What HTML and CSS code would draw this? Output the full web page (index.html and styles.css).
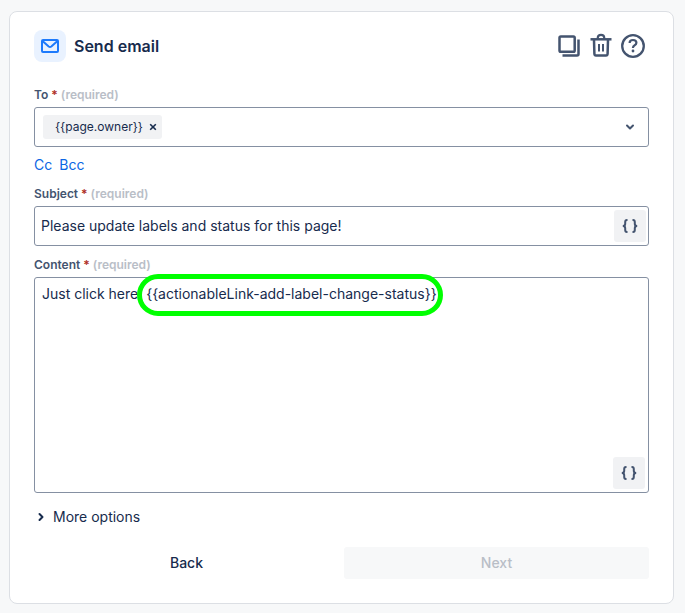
FILE: index.html
```html
<!DOCTYPE html>
<html lang="en">
<head>
    <meta charset="UTF-8">
    <meta name="viewport" content="width=device-width, initial-scale=1.0">
    <title>Send email</title>
    <link rel="stylesheet" href="styles.css">
</head>
<body>
    <form class="card">
        <header class="card-header">
            <span class="card-icon">
                <svg width="20" height="16" viewBox="0 0 20 16" fill="none" stroke="#1d7afc" stroke-width="2" stroke-linejoin="round">
                    <rect x="2" y="2" width="16" height="12" rx="1"/>
                    <path d="M2.500 3l6.200 5.500q1.300 1.100 2.600 0L17.500 3"/>
                </svg>
            </span>
            <h1>Send email</h1>
            <div class="header-actions">
                <button type="button" class="icon-btn" aria-label="Duplicate">
                    <svg width="24" height="24" viewBox="0 0 24 24" fill="none" stroke="#44546f">
                        <rect x="2.500" y="2.500" width="15.200" height="15.200" rx="1.300" stroke-width="2.500"/>
                        <path d="M21.500 5.500V20Q21.500 21.500 20 21.500H5.500" stroke-width="2.500"/>
                    </svg>
                </button>
                <button type="button" class="icon-btn" aria-label="Delete">
                    <svg width="24" height="24" viewBox="0 0 24 24" fill="none" stroke="#44546f">
                        <path d="M1.500 5.300H22.500" stroke-width="2.500"/>
                        <path d="M8.800 5V3.500Q8.800 .8 12 .8T15.200 3.500V5" stroke-width="2.200"/>
                        <path d="M5 6L5.400 19.800Q5.500 21.500 7 21.500H17Q18.500 21.500 18.600 19.800L19 6" stroke-width="2.500"/>
                        <path d="M10 10V17.500M14 10V17.500" stroke-width="2"/>
                    </svg>
                </button>
                <button type="button" class="icon-btn" aria-label="Help">
                    <svg width="24" height="24" viewBox="0 0 24 24" fill="none" stroke="#44546f">
                        <circle cx="12" cy="12" r="10.800" stroke-width="2.300"/>
                        <path d="M8.600 9Q8.600 6 12 6T15.400 8.800Q15.400 10.300 13.700 11.200T12 13.500V14" stroke-width="2.200"/>
                        <circle cx="12" cy="17" r="1.400" fill="#44546f" stroke="none"/>
                    </svg>
                </button>
            </div>
        </header>

        <div class="field">
            <label for="to">To<span class="star">*</span><span class="hint">(required)</span></label>
            <div class="control recipients">
                <span class="tag">{{page.owner}}
                    <button type="button" class="tag-remove" aria-label="Remove">
                        <svg width="8" height="8" viewBox="0 0 8 8" stroke="#172b4d" stroke-width="1.600"><path d="M1.200 1.200l5.600 5.600M6.800 1.200L1.200 6.800"/></svg>
                    </button>
                </span>
                <input id="to" class="recipients-input" type="text">
                <button type="button" class="chevron" aria-label="Show recipients">
                    <svg width="10" height="8" viewBox="0 0 10 8" fill="none" stroke="#44546f" stroke-width="2" stroke-linecap="round" stroke-linejoin="round"><path d="M2 2.500l3 3 3-3"/></svg>
                </button>
            </div>
            <div class="copy-links">
                <a href="#cc">Cc</a>
                <a href="#bcc">Bcc</a>
            </div>
        </div>

        <div class="field">
            <label for="subject">Subject<span class="star">*</span><span class="hint">(required)</span></label>
            <div class="control subject">
                <input id="subject" type="text" value="Please update labels and status for this page!">
                <button type="button" class="braces-btn" aria-label="Insert smart value">
                    <svg width="16" height="14" viewBox="0 0 16 14" fill="none" stroke="#44546f" stroke-width="2">
                        <path d="M5.500 1H5Q3.200 1 3.200 3V4.800Q3.200 7 .8 7Q3.200 7 3.200 9.200V11Q3.200 13 5 13H5.500"/>
                        <path d="M10.500 1H11Q12.800 1 12.800 3V4.800Q12.800 7 15.200 7Q12.800 7 12.800 9.200V11Q12.800 13 11 13H10.500"/>
                    </svg>
                </button>
            </div>
        </div>

        <div class="field">
            <label for="content">Content<span class="star">*</span><span class="hint">(required)</span></label>
            <div class="control content">
                <textarea id="content" spellcheck="false">Just click here: {{actionableLink-add-label-change-status}}</textarea>
                <span class="highlight"></span>
                <button type="button" class="braces-btn" aria-label="Insert smart value">
                    <svg width="16" height="14" viewBox="0 0 16 14" fill="none" stroke="#44546f" stroke-width="2">
                        <path d="M5.500 1H5Q3.200 1 3.200 3V4.800Q3.200 7 .8 7Q3.200 7 3.200 9.200V11Q3.200 13 5 13H5.500"/>
                        <path d="M10.500 1H11Q12.800 1 12.800 3V4.800Q12.800 7 15.200 7Q12.800 7 12.800 9.200V11Q12.800 13 11 13H10.500"/>
                    </svg>
                </button>
            </div>
        </div>

        <button type="button" class="more-options">
            <svg width="8" height="10" viewBox="0 0 8 10" fill="none" stroke="#172b4d" stroke-width="2" stroke-linecap="round" stroke-linejoin="round"><path d="M2.500 2l3 3-3 3"/></svg>
            More options
        </button>

        <footer class="card-footer">
            <button type="button" class="btn">Back</button>
            <button type="submit" class="btn" disabled>Next</button>
        </footer>
    </form>
</body>
</html>
```
FILE: styles.css
```css
* {
    box-sizing: border-box;
}
body {
    margin: 0;
    padding: 11px 11px 9px 9px;
    background: #f7f8f9;
    color: #172b4d;
    font-family: Inter, "Liberation Sans", sans-serif;
    font-size: 14px;
    line-height: 20px;
}
button, input, textarea {
    margin: 0;
    padding: 0;
    border: none;
    background: none;
    color: inherit;
    font: inherit;
    outline: none;
}
button {
    cursor: pointer;
}
svg {
    display: block;
    overflow: visible;
}
.card {
    display: flex;
    flex-direction: column;
    padding: 18px 24px 24px;
    border: 1px solid #dcdfe4;
    border-radius: 8px;
    background: #fff;
}

/* Header */
.card-header {
    display: flex;
    align-items: center;
    gap: 8px;
    margin-bottom: 25px;
}
.card-icon {
    display: flex;
    align-items: center;
    justify-content: center;
    width: 32px;
    height: 32px;
    border-radius: 8px;
    background: #e9f2ff;
}
h1 {
    margin: 0;
    font-size: 16px;
    font-weight: 600;
}
.header-actions {
    display: flex;
    gap: 8px;
    margin-left: auto;
    padding-right: 4px;
}

/* Fields */
.field {
    margin-bottom: 11px;
}
label {
    display: flex;
    gap: 3px;
    margin-bottom: 4px;
    color: #44546f;
    font-size: 12px;
    font-weight: 600;
    line-height: 16px;
}
.star {
    color: #ae2e24;
}
.hint {
    color: #b9bec7;
}
.control {
    display: flex;
    border: 1px solid #8590a2;
    border-radius: 3px;
    background: #fff;
}
.recipients, .subject {
    align-items: center;
    height: 40px;
}
.recipients {
    padding: 0 13px 0 8px;
}
.tag {
    display: flex;
    align-items: center;
    gap: 6px;
    height: 24px;
    padding: 0 5px 0 12px;
    border-radius: 3px;
    background: #f1f2f4;
    font-size: 12px;
}
.recipients-input {
    flex: 1;
    min-width: 0;
}
.copy-links {
    display: flex;
    gap: 7px;
    padding-top: 8px;
}
.copy-links a {
    color: #0c66e4;
    text-decoration: none;
}
.subject {
    padding: 0 2px 0 6px;
}
.subject input {
    flex: 1;
    min-width: 0;
}
.braces-btn {
    display: flex;
    align-items: center;
    justify-content: center;
    width: 32px;
    height: 32px;
    border-radius: 3px;
    background: #f1f2f4;
}
.content {
    position: relative;
    align-items: flex-end;
    min-height: 216px;
    padding: 6px 3px 3px 7px;
}
.content textarea {
    flex: 1;
    align-self: stretch;
    min-width: 0;
    resize: none;
}
.highlight {
    position: absolute;
    top: -4px;
    left: 102px;
    width: 306px;
    height: 42px;
    border: 5px solid #00ff00;
    border-radius: 21px;
    pointer-events: none;
}

/* Footer */
.more-options {
    display: flex;
    align-items: center;
    gap: 8px;
    align-self: flex-start;
    margin: 3px 0 20px 3px;
}
.card-footer {
    display: grid;
    grid-template-columns: 1fr 1fr;
    gap: 5px;
}
.btn {
    height: 32px;
    border-radius: 3px;
    font-weight: 500;
}
.btn:disabled {
    background: #f7f8f9;
    color: #b9bec7;
    cursor: default;
}
```
